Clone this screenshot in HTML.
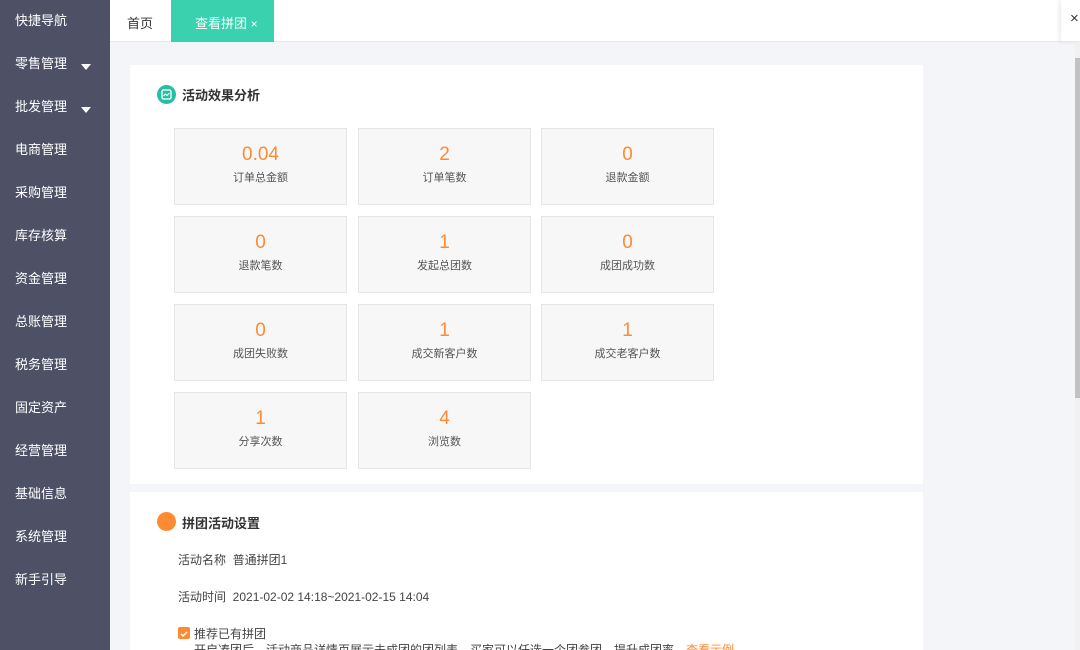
<!DOCTYPE html>
<html><head><meta charset="utf-8"><style>
*{margin:0;padding:0;box-sizing:border-box}
html,body{width:1080px;height:650px;overflow:hidden}
body{background:#f4f5f9;font-family:"Liberation Sans","Noto Sans CJK SC",sans-serif;position:relative}
.side{position:absolute;left:0;top:0;width:110px;height:650px;background:#4e5166}
.side div{position:absolute;left:15px;color:#fff;font-size:13px;line-height:16px}
.side .arr{position:absolute;left:81px;width:0;height:0;border-left:5px solid transparent;border-right:5px solid transparent;border-top:6px solid #fff;margin-top:4px}
.top{position:absolute;left:110px;top:0;width:970px;height:42px;background:#fff;border-bottom:1px solid #e8e8e8}
.t1{position:absolute;left:17px;top:13px;font-size:13px;color:#333}
.t2{position:absolute;left:61px;top:0;width:103px;height:42px;background:#3ad2ae;color:#fff;font-size:13px;padding:13px 0 0 24px}
.t3{position:absolute;left:951px;top:0;width:19px;height:42px;box-shadow:-2px 0 4px rgba(0,0,0,.08);font-size:15px;padding:10px 0 0 9px;color:#333}
.card{position:absolute;left:130px;width:793px;background:#fff}
.h{position:absolute;font-size:13px;font-weight:bold;color:#333}
.box{position:absolute;width:173px;height:77px;background:#f7f7f7;border:1px solid #e5e5e5;text-align:center}
.box b{display:block;font-weight:normal;color:#ff8a34;font-size:19px;margin-top:14px;line-height:24px}
.box span{display:block;color:#555;font-size:11px;margin-top:2px}
.txt{position:absolute;font-size:12px;color:#444}
.sb{position:absolute;left:1075px;top:43px;width:5px;height:607px;background:#f1f1f1}
.sb i{position:absolute;left:0;top:15px;width:5px;height:340px;background:#c1c1c1}
</style></head><body>
<div class="side">
<div style="top:13px">快捷导航</div>
<div style="top:56px">零售管理</div><span class="arr" style="top:60px"></span>
<div style="top:99px">批发管理</div><span class="arr" style="top:103px"></span>
<div style="top:142px">电商管理</div>
<div style="top:185px">采购管理</div>
<div style="top:228px">库存核算</div>
<div style="top:271px">资金管理</div>
<div style="top:314px">总账管理</div>
<div style="top:357px">税务管理</div>
<div style="top:400px">固定资产</div>
<div style="top:443px">经营管理</div>
<div style="top:486px">基础信息</div>
<div style="top:529px">系统管理</div>
<div style="top:572px">新手引导</div>
</div>
<div class="top"><div class="t1">首页</div><div class="t2">查看拼团 <span style="font-size:12px">×</span></div><div class="t3">×</div></div>
<div class="card" style="top:65px;height:419px">
<svg style="position:absolute;left:27px;top:20px" width="19" height="19" viewBox="0 0 19 19"><circle cx="9.5" cy="9.5" r="9.5" fill="#25bfa6"/><rect x="5" y="5" width="9" height="9" rx="1.5" fill="none" stroke="#fff" stroke-width="1.3"/><path d="M6.5 11l2-2 1.5 1.5 2.5-2.5" stroke="#fff" fill="none" stroke-width="1.1"/></svg>
<div class="h" style="left:52px;top:20px">活动效果分析</div>
</div>
<div class="box" style="left:174px;top:128px"><b>0.04</b><span>订单总金额</span></div>
<div class="box" style="left:358px;top:128px"><b>2</b><span>订单笔数</span></div>
<div class="box" style="left:541px;top:128px"><b>0</b><span>退款金额</span></div>
<div class="box" style="left:174px;top:216px"><b>0</b><span>退款笔数</span></div>
<div class="box" style="left:358px;top:216px"><b>1</b><span>发起总团数</span></div>
<div class="box" style="left:541px;top:216px"><b>0</b><span>成团成功数</span></div>
<div class="box" style="left:174px;top:304px"><b>0</b><span>成团失败数</span></div>
<div class="box" style="left:358px;top:304px"><b>1</b><span>成交新客户数</span></div>
<div class="box" style="left:541px;top:304px"><b>1</b><span>成交老客户数</span></div>
<div class="box" style="left:174px;top:392px"><b>1</b><span>分享次数</span></div>
<div class="box" style="left:358px;top:392px"><b>4</b><span>浏览数</span></div>
<div class="card" style="top:492px;height:158px">
<div style="position:absolute;left:27px;top:20px;width:19px;height:19px;border-radius:50%;background:#ff8a34"></div>
<div class="h" style="left:52px;top:21px">拼团活动设置</div>
<div class="txt" style="left:48px;top:59px">活动名称&nbsp; 普通拼团1</div>
<div class="txt" style="left:48px;top:96px">活动时间&nbsp; 2021-02-02 14:18~2021-02-15 14:04</div>
<div style="position:absolute;left:48px;top:135px;width:12px;height:12px;background:#ff8a34;border-radius:2px"><svg width="12" height="12"><path d="M3 6l2 2 4-4" stroke="#fff" stroke-width="1.5" fill="none"/></svg></div>
<div class="txt" style="left:64px;top:133px">推荐已有拼团</div>
<div class="txt" style="left:64px;top:149px;white-space:nowrap">开启凑团后，活动商品详情页展示未成团的团列表，买家可以任选一个团参团，提升成团率。<span style="color:#ff8a34">查看示例</span></div>
</div>
<div class="sb"><i></i></div>
</body></html>
